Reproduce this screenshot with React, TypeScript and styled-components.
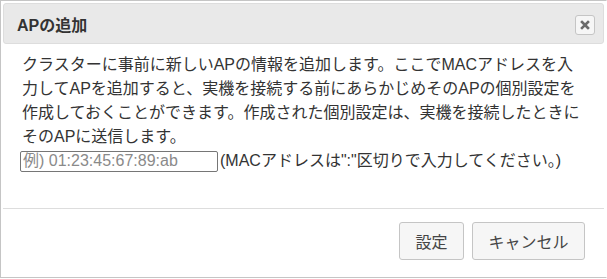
import React from "react";
import styled, { createGlobalStyle } from "styled-components";

const GlobalStyle = createGlobalStyle`
    html, body {
        margin: 0;
        padding: 0;
        background: #fff;
    }
    body {
        font-family: "Liberation Sans", "Noto Sans CJK JP", sans-serif;
        color: #333;
    }
`;

const Dialog = styled.div`
    box-sizing: border-box;
    width: 607px;
    height: 278px;
    border: 1px solid #c5c5c5;
    border-right-color: #fff;
    padding: 2px;
    display: flex;
    flex-direction: column;
    background: #fff;
`;

const TitleBar = styled.div`
    box-sizing: border-box;
    height: 41px;
    border: 1px solid #dddddd;
    border-radius: 3px;
    background: #e9e9e9;
    display: flex;
    align-items: center;
    justify-content: space-between;
    padding: 0 8px 0 13px;
`;

const Title = styled.span`
    font-size: 16px;
    font-weight: bold;
    color: #333;
`;

const CloseButton = styled.button`
    all: unset;
    box-sizing: border-box;
    width: 20px;
    height: 20px;
    border: 1px solid #c5c5c5;
    border-radius: 3px;
    background: #f6f6f6;
    display: flex;
    align-items: center;
    justify-content: center;
    margin-top: 2px;
`;

const Content = styled.div`
    padding: 9px 16px 0 19px;
    font-size: 16px;
    line-height: 24px;
    color: #333;
    flex: 1;
`;

const Paragraph = styled.p`
    margin: 0;
    white-space: nowrap;
`;

const InputRow = styled.div`
    display: flex;
    align-items: center;
    gap: 2px;
    margin-top: 0;
    white-space: nowrap;
`;

const MacInput = styled.input`
    box-sizing: border-box;
    width: 198px;
    height: 21px;
    margin: 0 0 0 -2px;
    padding: 0 2px;
    border: 1px solid #767676;
    border-radius: 2px;
    font-family: "Liberation Sans", "Noto Sans CJK JP", sans-serif;
    font-size: 16px;
    color: #333;

    &::placeholder {
        color: #8a8a8a;
    }
`;

const ButtonPane = styled.div`
    border-top: 1px solid #dddddd;
    display: flex;
    justify-content: flex-end;
    gap: 8px;
    padding: 13px 19px 15px 0;
`;

const PaneButton = styled.button<{ $wide?: boolean }>`
    box-sizing: border-box;
    height: 38px;
    min-width: ${(props) => props.$wide ? "113px" : "65px"};
    border: 1px solid #c5c5c5;
    border-radius: 3px;
    background: #f6f6f6;
    color: #454545;
    font-family: "Liberation Sans", "Noto Sans CJK JP", sans-serif;
    font-size: 16px;
    padding: 0 14px;
    cursor: pointer;
`;

const App: React.FC = () => {
    return (
        <>
            <GlobalStyle />
            <Dialog>
                <TitleBar>
                    <Title>APの追加</Title>
                    <CloseButton aria-label="close">
                        <svg width="10" height="10" viewBox="0 0 10 10">
                            <path d="M2 2 L8 8 M8 2 L2 8" stroke="#6a6a6a" strokeWidth="2.6" strokeLinecap="square" />
                        </svg>
                    </CloseButton>
                </TitleBar>
                <Content>
                    <Paragraph>
                        クラスターに事前に新しいAPの情報を追加します。ここでMACアドレスを入<br />
                        力してAPを追加すると、実機を接続する前にあらかじめそのAPの個別設定を<br />
                        作成しておくことができます。作成された個別設定は、実機を接続したときに<br />
                        そのAPに送信します。
                    </Paragraph>
                    <InputRow>
                        <MacInput type="text" placeholder="例) 01:23:45:67:89:ab" />
                        <span>(MACアドレスは":"区切りで入力してください。)</span>
                    </InputRow>
                </Content>
                <ButtonPane>
                    <PaneButton>設定</PaneButton>
                    <PaneButton $wide>キャンセル</PaneButton>
                </ButtonPane>
            </Dialog>
        </>
    );
};

export default App;
